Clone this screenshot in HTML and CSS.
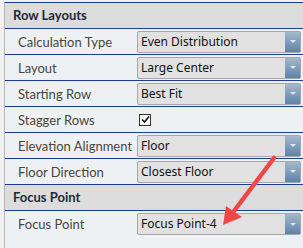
FILE: index.html
```html
<!DOCTYPE html>
<html lang="en">
<head>
    <meta charset="UTF-8">
    <meta name="viewport" content="width=device-width, initial-scale=1.0">
    <title>Row Layouts</title>
    <link rel="stylesheet" href="styles.css">
</head>
<body>

<div class="panel">
    <div class="section">Row Layouts</div>

    <div class="row">
        <span class="label">Calculation Type</span>
        <div class="select"><span>Even Distribution</span><i class="drop"></i></div>
    </div>
    <div class="row">
        <span class="label">Layout</span>
        <div class="select"><span>Large Center</span><i class="drop"></i></div>
    </div>
    <div class="row">
        <span class="label">Starting Row</span>
        <div class="select"><span>Best Fit</span><i class="drop"></i></div>
    </div>
    <div class="row">
        <span class="label">Stagger Rows</span>
        <div class="check">
            <svg width="9" height="9" viewBox="0 0 9 9"><path d="M1 4.5 L3.5 7 L8 1.5" fill="none" stroke="#111" stroke-width="1.6"/></svg>
        </div>
    </div>
    <div class="row">
        <span class="label">Elevation Alignment</span>
        <div class="select"><span>Floor</span><i class="drop"></i></div>
    </div>
    <div class="row">
        <span class="label">Floor Direction</span>
        <div class="select"><span>Closest Floor</span><i class="drop"></i></div>
    </div>

    <div class="section">Focus Point</div>

    <div class="row last">
        <span class="label">Focus Point</span>
        <div class="select"><span>Focus Point-4</span><i class="drop"></i></div>
    </div>
</div>

<!-- annotation arrow -->
<svg class="callout" width="303" height="248" viewBox="0 0 303 248">
    <line x1="274" y1="158" x2="234" y2="211" stroke="#ef4646" stroke-width="4.5" stroke-linecap="round"/>
    <polygon points="223,225 226,206 242,217" fill="#ef4646"/>
</svg>

</body>
</html>
```

FILE: styles.css
```css
* {
    box-sizing: border-box;
    margin: 0;
    padding: 0;
}

body {
    background: #f0f0f0;
    font-family: 'Lato', 'Noto Sans', sans-serif;
    width: 303px;
    height: 248px;
    overflow: hidden;
    position: relative;
}

/* Property panel */
.panel {
    margin: 2px 0 0 4px;
    border-left: 1px solid #b4b8bc;
    border-top: 1px solid #1b3c95;
    background: #eef1f3;
    min-height: 246px;
}

.section {
    height: 26px;
    line-height: 25px;
    padding-left: 8px;
    background: #dcdcdc;
    border-bottom: 1px solid #1b3c95;
    font-size: 13px;
    font-weight: bold;
    color: #1e2a38;
}

.row {
    display: grid;
    grid-template-columns: 132px 1fr;
    align-items: center;
    height: 26px;
    border-bottom: 1px solid #1b3c95;
    padding-right: 2px;
}

.row.last {
    border-bottom: none;
}

.label {
    padding-left: 13px;
    font-size: 13px;
    color: #4a4538;
}

/* Dropdown */
.select {
    display: flex;
    align-items: stretch;
    height: 22px;
    background: #e1e1e1;
    border: 1px solid #a6a6a6;
    border-radius: 2px;
}

.select span {
    flex: 1;
    padding-left: 3px;
    line-height: 20px;
    font-family: 'Noto Sans', 'Open Sans', sans-serif;
    font-size: 12px;
    color: #111;
}

.drop {
    width: 15px;
    background: linear-gradient(#a3b9cc, #5d82a8);
    display: flex;
    align-items: center;
    justify-content: center;
}

.drop::after {
    content: "";
    border-left: 3.5px solid transparent;
    border-right: 3.5px solid transparent;
    border-top: 3px solid #dfe6ee;
}

/* Checkbox */
.check {
    width: 12px;
    height: 12px;
    margin-left: 2px;
    background: #fff;
    border: 1px solid #333;
    display: flex;
    align-items: center;
    justify-content: center;
}

.callout {
    position: absolute;
    left: 0;
    top: 0;
    pointer-events: none;
}
```
